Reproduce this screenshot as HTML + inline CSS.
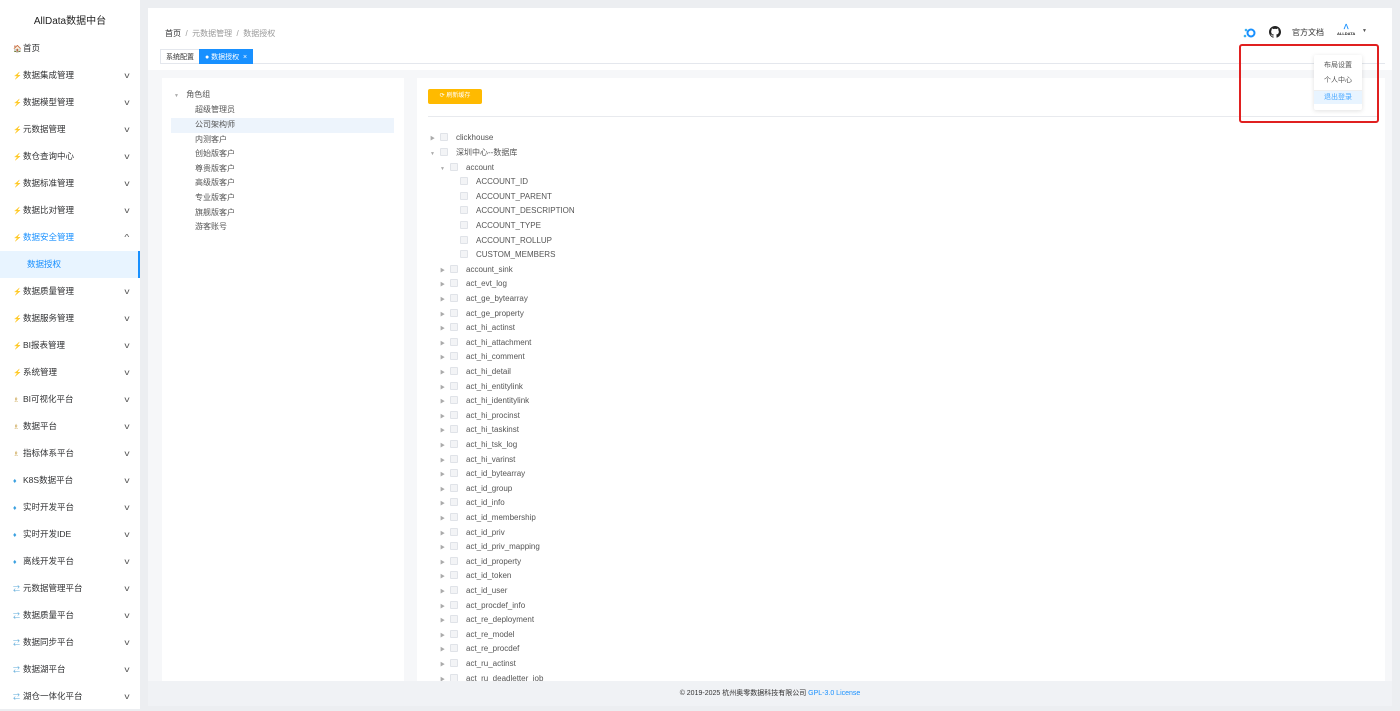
<!DOCTYPE html>
<html><head><meta charset="utf-8"><style>
*{margin:0;padding:0;box-sizing:border-box}
body{width:1400px;height:709px;overflow:hidden;background:#eceef1;font-family:"Liberation Sans","Noto Sans CJK SC",sans-serif;position:relative;color:#303133}
.side{position:absolute;left:0;top:0;width:140px;height:709px;background:#fff}
.logo{position:absolute;top:12px;left:0;width:140px;text-align:center;font-size:10px;color:#222}
.mi{position:absolute;left:0;width:140px;height:27px;line-height:27px;font-size:8.5px;padding-left:13px;color:#303133}
.mi .ic{display:inline-block;width:10px;font-size:7px}
.mi .ar{position:absolute;right:11px;top:0;font-size:8px;color:#555;transform:scaleX(1.3)}
.main{position:absolute;left:148px;top:8px;width:1244px;height:673px;background:#fff}
.footer{position:absolute;left:148px;top:681px;width:1244px;height:25px;background:#f0f2f5;text-align:center;font-size:7px;line-height:26px;color:#333}
.bc{position:absolute;left:165px;top:28px;font-size:8px;color:#999}
.bc b{color:#303133;font-weight:normal}
.tabs{position:absolute;left:160px;top:48px;width:1225px;height:16px;border-bottom:1px solid #e4e7ed}
.tab{position:absolute;top:1px;height:15px;line-height:15px;font-size:7px;padding:0 5px;border:1px solid #e4e7ed}
.area{position:absolute;left:148px;top:70px;width:1244px;height:611px;background:#f6f7f9}
.pl{position:absolute;left:162px;top:78px;width:242px;height:603px;background:#fff}
.pr{position:absolute;left:417px;top:78px;width:968px;height:603px;background:#fff;overflow:hidden}
.row{position:absolute;height:14.6px;line-height:14.6px;font-size:8px;color:#555;white-space:nowrap}
.cb{display:inline-block;width:8px;height:8px;border:1px solid #e0e3e8;background:#f3f4f6;border-radius:1px;vertical-align:-1px;margin-right:8px}
.tri{display:inline-block;width:10px;font-size:5px;color:#aaa}
</style></head><body>
<div class="side">
<div class="logo">AllData数据中台</div>
<div class="mi" style="top:35px"><span class="ic">🏠</span>首页</div>
<div class="mi" style="top:62px"><span class="ic" style="color:#f5c000">⚡</span>数据集成管理<span class="ar">v</span></div>
<div class="mi" style="top:89px"><span class="ic" style="color:#f5c000">⚡</span>数据模型管理<span class="ar">v</span></div>
<div class="mi" style="top:116px"><span class="ic" style="color:#f5c000">⚡</span>元数据管理<span class="ar">v</span></div>
<div class="mi" style="top:143px"><span class="ic" style="color:#f5c000">⚡</span>数仓查询中心<span class="ar">v</span></div>
<div class="mi" style="top:170px"><span class="ic" style="color:#f5c000">⚡</span>数据标准管理<span class="ar">v</span></div>
<div class="mi" style="top:197px"><span class="ic" style="color:#f5c000">⚡</span>数据比对管理<span class="ar">v</span></div>
<div class="mi" style="top:224px;color:#1890ff"><span class="ic" style="color:#f5c000">⚡</span>数据安全管理<span class="ar">^</span></div>
<div class="mi" style="top:251px;background:#e8f4ff;color:#1890ff;padding-left:27px;border-right:2px solid #1890ff">数据授权</div>
<div class="mi" style="top:278px"><span class="ic" style="color:#f5c000">⚡</span>数据质量管理<span class="ar">v</span></div>
<div class="mi" style="top:305px"><span class="ic" style="color:#f5c000">⚡</span>数据服务管理<span class="ar">v</span></div>
<div class="mi" style="top:332px"><span class="ic" style="color:#f5c000">⚡</span>BI报表管理<span class="ar">v</span></div>
<div class="mi" style="top:359px"><span class="ic" style="color:#f5c000">⚡</span>系统管理<span class="ar">v</span></div>
<div class="mi" style="top:386px"><span class="ic" style="color:#c9a24a">♗</span>BI可视化平台<span class="ar">v</span></div>
<div class="mi" style="top:413px"><span class="ic" style="color:#c9a24a">♗</span>数据平台<span class="ar">v</span></div>
<div class="mi" style="top:440px"><span class="ic" style="color:#c9a24a">♗</span>指标体系平台<span class="ar">v</span></div>
<div class="mi" style="top:467px"><span class="ic" style="color:#3aa0e0">♦</span>K8S数据平台<span class="ar">v</span></div>
<div class="mi" style="top:494px"><span class="ic" style="color:#3aa0e0">♦</span>实时开发平台<span class="ar">v</span></div>
<div class="mi" style="top:521px"><span class="ic" style="color:#3aa0e0">♦</span>实时开发IDE<span class="ar">v</span></div>
<div class="mi" style="top:548px"><span class="ic" style="color:#3aa0e0">♦</span>离线开发平台<span class="ar">v</span></div>
<div class="mi" style="top:575px"><span class="ic" style="color:#5aa8d8">⇄</span>元数据管理平台<span class="ar">v</span></div>
<div class="mi" style="top:602px"><span class="ic" style="color:#5aa8d8">⇄</span>数据质量平台<span class="ar">v</span></div>
<div class="mi" style="top:629px"><span class="ic" style="color:#5aa8d8">⇄</span>数据同步平台<span class="ar">v</span></div>
<div class="mi" style="top:656px"><span class="ic" style="color:#5aa8d8">⇄</span>数据湖平台<span class="ar">v</span></div>
<div class="mi" style="top:683px"><span class="ic" style="color:#5aa8d8">⇄</span>湖仓一体化平台<span class="ar">v</span></div>
</div>
<div class="main"></div>
<div class="area"></div>
<div class="bc"><b>首页</b> &nbsp;/&nbsp; 元数据管理 &nbsp;/&nbsp; 数据授权</div>
<div class="tabs">
<div class="tab" style="left:0;color:#333">系统配置</div>
<div class="tab" style="left:39px;background:#1890ff;border-color:#1890ff;color:#fff">● 数据授权 &nbsp;×</div>
</div>
<div style="position:absolute;left:1243px;top:26px;width:14px;height:12px">
<svg width="14" height="12"><circle cx="8" cy="6" r="3.5" fill="none" stroke="#1890ff" stroke-width="2"/><circle cx="3" cy="3" r="1.3" fill="#3ab0f0"/><circle cx="2" cy="9" r="1.3" fill="#3ab0f0"/></svg></div>
<svg style="position:absolute;left:1269px;top:26px" width="12" height="12" viewBox="0 0 16 16"><path fill="#222" d="M8 0C3.6 0 0 3.6 0 8c0 3.5 2.3 6.5 5.5 7.6.4.1.5-.2.5-.4v-1.4c-2.200.5-2.700-1-2.700-1-.4-.9-.9-1.200-.9-1.200-.7-.5.1-.5.1-.5.8.1 1.200.8 1.200.8.7 1.200 1.900.9 2.300.7.1-.5.3-.9.5-1.100-1.800-.2-3.600-.9-3.600-4 0-.9.3-1.600.8-2.100-.1-.2-.4-1 .1-2.100 0 0 .7-.2 2.200.8.6-.2 1.300-.3 2-.3s1.400.1 2 .3c1.500-1 2.200-.8 2.200-.8.4 1.100.2 1.900.1 2.100.5.6.8 1.300.8 2.100 0 3.100-1.900 3.700-3.600 3.900.3.3.5.8.5 1.500v2.200c0 .2.1.5.6.4C13.700 14.500 16 11.500 16 8c0-4.400-3.600-8-8-8z"/></svg>
<div style="position:absolute;left:1292px;top:27px;font-size:8px;color:#333">官方文档</div>
<div style="position:absolute;left:1337px;top:25px;font-size:4px;font-weight:bold;color:#222;text-align:center;line-height:6px"><span style="color:#1890ff;font-size:7px">ᐱ</span><br>ALLDATA</div>
<div style="position:absolute;left:1362px;top:28px;font-size:5px;color:#555">▼</div>
<div class="pl">
<div class="row" style="left:12px;top:10px"><span class="tri">▼</span>&nbsp;角色组</div>
<div class="row" style="left:9px;top:40px;width:223px;background:#edf4fc"></div>
<div class="row" style="left:33px;top:25px">超级管理员</div>
<div class="row" style="left:33px;top:40px">公司架构师</div>
<div class="row" style="left:33px;top:54.6px">内测客户</div>
<div class="row" style="left:33px;top:69.2px">创始版客户</div>
<div class="row" style="left:33px;top:83.8px">尊贵版客户</div>
<div class="row" style="left:33px;top:98.4px">高级版客户</div>
<div class="row" style="left:33px;top:113px">专业版客户</div>
<div class="row" style="left:33px;top:127.6px">旗舰版客户</div>
<div class="row" style="left:33px;top:142.2px">游客账号</div>
</div>
<div class="pr">
<div style="position:absolute;left:11px;top:11px;width:54px;height:15px;background:#ffba00;border-radius:2px;color:#fff;font-size:6px;line-height:15px;text-align:center">⟳ 刷新缓存</div>
<div style="position:absolute;left:11px;top:38px;width:950px;height:1px;background:#e8eaee"></div>
<div id="t"></div>
</div>
<div style="position:absolute;left:1314px;top:55px;width:48px;height:55px;background:#fff;box-shadow:0 1px 5px rgba(0,0,0,.12);border-radius:2px;font-size:7px;color:#555;z-index:5">
<div style="position:absolute;left:10px;top:5px">布局设置</div>
<div style="position:absolute;left:10px;top:20px">个人中心</div>
<div style="position:absolute;left:0;top:35px;width:48px;height:14px;border-top:1px solid #eee;background:#e8f4ff;color:#46a6ff;padding-left:10px;line-height:14px">退出登录</div>
</div>
<div style="position:absolute;left:1239px;top:44px;width:140px;height:79px;border:2px solid #e02020;border-radius:3px;z-index:6"></div>
<div class="footer">© 2019-2025 杭州奥零数据科技有限公司 <span style="color:#1890ff">GPL-3.0 License</span></div>
<script>
var t=document.getElementById('t'),h='',y=53.4;
function r(x,tri,txt){h+='<div class="row" style="left:'+x+'px;top:'+y.toFixed(1)+'px"><span class="tri">'+tri+'</span><span class="cb"></span>'+txt+'</div>';y+=14.6;}
r(13,'▶','clickhouse');r(13,'▼','深圳中心--数据库');r(23,'▼','account');
['ACCOUNT_ID','ACCOUNT_PARENT','ACCOUNT_DESCRIPTION','ACCOUNT_TYPE','ACCOUNT_ROLLUP','CUSTOM_MEMBERS'].forEach(function(s){r(33,'',s)});
r(23,'▶','account_sink');
'act_evt_log act_ge_bytearray act_ge_property act_hi_actinst act_hi_attachment act_hi_comment act_hi_detail act_hi_entitylink act_hi_identitylink act_hi_procinst act_hi_taskinst act_hi_tsk_log act_hi_varinst act_id_bytearray act_id_group act_id_info act_id_membership act_id_priv act_id_priv_mapping act_id_property act_id_token act_id_user act_procdef_info act_re_deployment act_re_model act_re_procdef act_ru_actinst act_ru_deadletter_job'.split(' ').forEach(function(s){r(23,'▶',s)});
t.innerHTML=h;
</script>
</body></html>
